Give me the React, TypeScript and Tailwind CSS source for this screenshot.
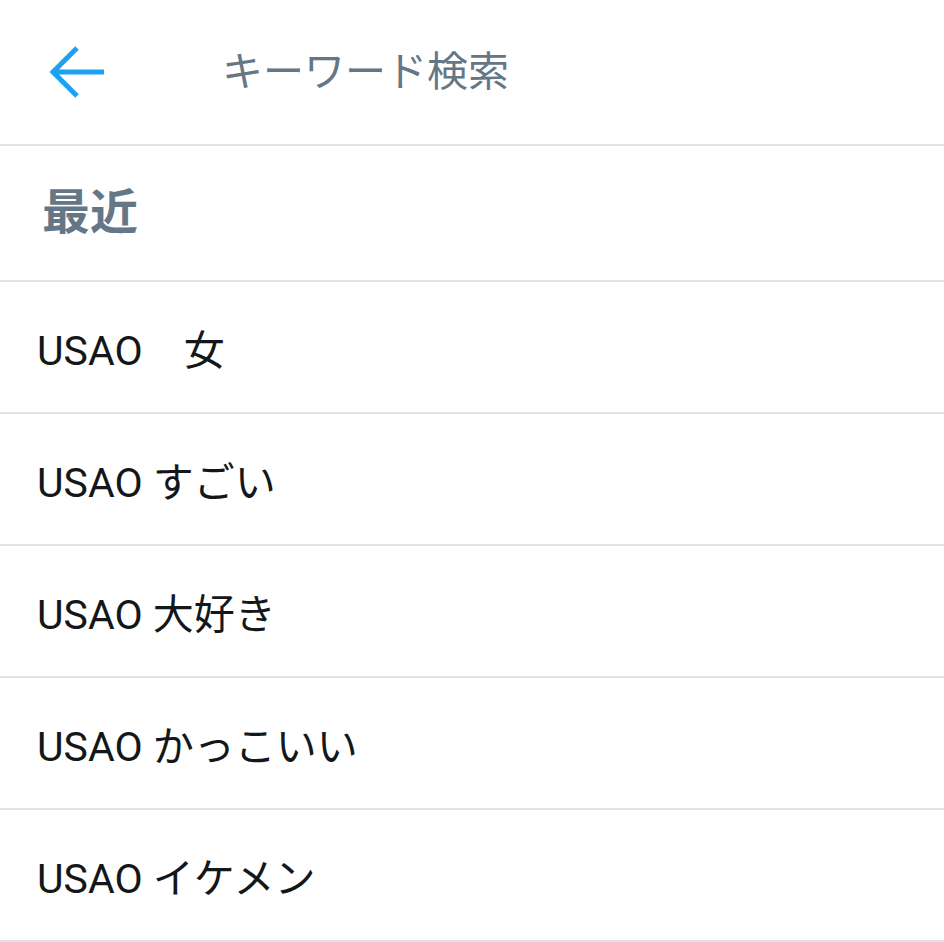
const ITEMS = ["USAO　女", "USAO すごい", "USAO 大好き", "USAO かっこいい", "USAO イケメン"];

const FONT = "font-['Roboto','Noto_Sans_CJK_JP',sans-serif]";

export default function App() {
  return (
    <div className={`w-[944px] h-[942px] overflow-hidden bg-white ${FONT}`}>
      <header className="h-[146px] flex items-center border-b-2 border-[#dde3e7]">
        <div className="w-[222px] pl-[48px] flex items-center">
          <svg width="58" height="54" viewBox="0 0 58 54" fill="none">
            <path
              d="M56 27H6M29 3L5 27l24 24"
              stroke="#1da1f2"
              strokeWidth="5"
              strokeLinecap="butt"
              strokeLinejoin="miter"
            />
          </svg>
        </div>
        <span className="text-[41px] leading-none text-[#657786]">キーワード検索</span>
      </header>
      <section className="h-[136px] flex items-center pl-[42px] border-b-2 border-[#dde3e7]">
        <span className="text-[48px] leading-none font-bold text-[#657786]">最近</span>
      </section>
      {ITEMS.map((t) => (
        <div key={t} className="h-[132px] flex items-center pl-[37px] border-b-2 border-[#dde3e7]">
          <span className="text-[41px] leading-none text-[#14171a] whitespace-pre mt-[8px]">{t}</span>
        </div>
      ))}
    </div>
  );
}
